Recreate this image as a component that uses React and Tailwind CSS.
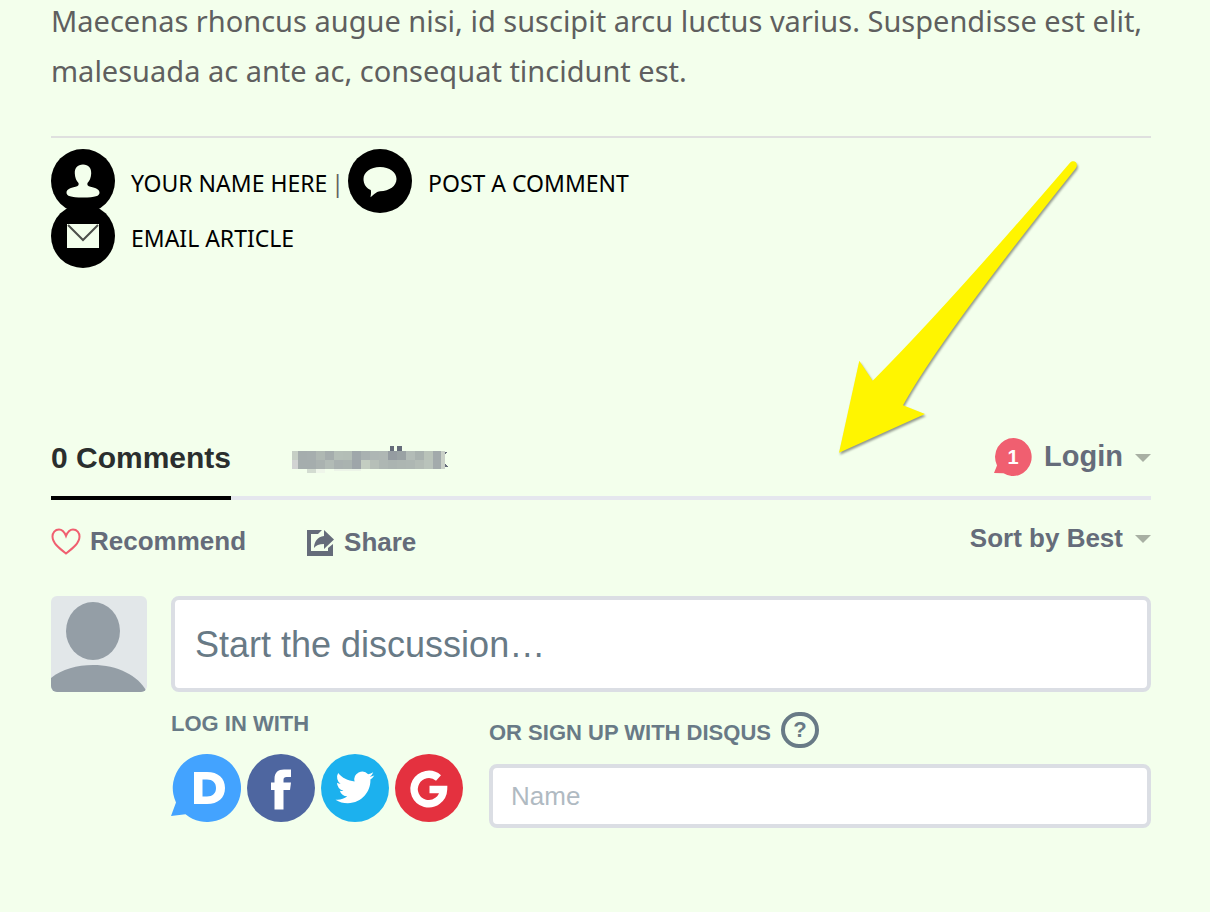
import { useState } from 'react';

const censorRows = [
  ['#c6cfc5', '#a5adad', '#a6aeae', '#afb8b3', '#a5adad', '#b4beb7', '#b3bdb6', '#9fa7aa', '#a9b1b1', '#aeb6b4', '#afb7b4', '#959ca1', '#9aa2a4', '#b3bcb7', '#a9b2af', '#b9c3b9', '#a2aaab', '#c9d0c7'],
  ['#d1d3d2', '#a5adad', '#a5adad', '#aab2b0', '#b2bbb6', '#a9b1b0', '#aab3b0', '#9ea5a9', '#c3cdc1', '#b6bfb8', '#aeb7b3', '#abb4b1', '#adb6b2', '#aeb7b3', '#b3bcb6', '#b9c3bb', '#a3abac', '#c9d0c7'],
];

function CensoredName() {
  return (
    <svg width="156" height="30" viewBox="0 0 156 30" shapeRendering="crispEdges" aria-hidden="true">
      {censorRows.map((row, r) =>
        row.map((fill, i) => (
          <rect
            key={`${r}-${i}`}
            x={i === 0 ? 0 : 6 + (i - 1) * 9 - (i === 17 ? 1 : 0)}
            y={7 + r * 9}
            width={i === 0 ? 6 : i === 17 ? 4 : 9}
            height="9"
            fill={fill}
          />
        ))
      )}
      <rect x="15" y="25" width="9" height="4" fill="#d3dcd1" />
      <rect x="24" y="25" width="9" height="4" fill="#eff6ea" />
      <rect x="42" y="25" width="27" height="2" fill="#ecf4e8" />
      <rect x="98" y="2" width="4" height="5" fill="#656c7a" />
      <rect x="105" y="2" width="5" height="5" fill="#656c7a" />
      <path d="M153 8h2l-2 3zM153 19l3 4h-3z" fill="#656c7a" />
    </svg>
  );
}

function Caret() {
  return (
    <svg width="16" height="8" viewBox="0 0 16 8" aria-hidden="true" className="pointer-events-none shrink-0">
      <path d="M0 0h16L8 8z" fill="#a8b0a3" />
    </svg>
  );
}

function RoundIcon({ children }) {
  return (
    <svg width="64" height="64" viewBox="0 0 64 64" aria-hidden="true" className="shrink-0">
      <circle cx="32" cy="32" r="32" fill="#000" />
      {children}
    </svg>
  );
}

function ArticleLinks() {
  return (
    <div className="mt-[11px] font-['Noto_Sans'] text-[23px] text-black">
      <div className="flex items-center">
        <a href="#author" className="flex items-center gap-4">
          <RoundIcon>
            <path d="M32 15.500c5.500 0 8.500 3.500 8.200 9-.2 4.500-1.700 7.500-3.700 9.500-.7 2 .5 3.200 3 3.800 5.500 1 9 2.700 9 6 0 3.200-4 4.700-16.500 4.700s-16.500-1.500-16.500-4.700c0-3.300 3.500-5 9-6 2.500-.6 3.700-1.800 3-3.800-2-2-3.500-5-3.700-9.500-.3-5.500 2.700-9 8.200-9z" fill="#f3ffec" />
          </RoundIcon>
          <span className="pt-1">YOUR NAME HERE</span>
        </a>
        <span className="px-1 pt-1 text-[#636363]">|</span>
        <a href="#comments" className="flex items-center gap-4">
          <RoundIcon>
            <path d="M32 18c9.500 0 16.500 5 16.500 12S41.500 42 32 42.300c-3 .2-5 2.200-9.500 6 .5-2.500.7-5 .3-7.200-4.600-2-7.300-6-7.300-11.100C15.500 23 22.500 18 32 18z" fill="#f3ffec" />
          </RoundIcon>
          <span className="pt-1">POST A COMMENT</span>
        </a>
      </div>
      <a href="#email" className="-mt-[9px] flex w-fit items-center gap-4">
        <RoundIcon>
          <rect x="16" y="20" width="32" height="24" fill="#f3ffec" />
          <path d="M17 21l15 15 15-15" fill="none" stroke="#4c4f4a" strokeWidth="2" />
        </RoundIcon>
        <span className="pt-1">EMAIL ARTICLE</span>
      </a>
    </div>
  );
}

function PointerArrow() {
  return (
    <svg
      width="100"
      height="310"
      viewBox="0 0 100 310"
      aria-hidden="true"
      className="pointer-events-none absolute top-[155px] right-[271px] overflow-visible drop-shadow-[1px_2px_1px_rgba(0,0,0,0.4)]"
    >
      <path
        d="M0 297.700L20.300 205.700 33.700 225.700Q109 150 231 7.700C235 4 240 8 237 13Q101 183 64 250.300L86 259z"
        fill="#fff500"
      />
    </svg>
  );
}

function DisqusIcon() {
  return (
    <svg width="70" height="68" viewBox="0 0 70 68" aria-hidden="true">
      <path d="M36 0a34 34 0 1 1-21.500 60.300L0 62l5-13.500A34 34 0 0 1 36 0z" fill="#43a3ff" />
      <path d="M23 18h13c11 0 18 6 18 16s-7 16-18 16H23zM31.500 25.500v17H36c5.500 0 9-3 9-8.500s-3.500-8.500-9-8.500z" fill="#fff" />
    </svg>
  );
}

function FacebookIcon() {
  return (
    <svg width="68" height="68" viewBox="0 0 68 68" aria-hidden="true">
      <circle cx="34" cy="34" r="34" fill="#4e66a0" />
      <path d="M27.500 55.500V36H24v-7.500h3.500V25c0-6.500 3.500-9.500 9.500-9.500h7V23h-4.500c-2 0-3 .8-3 2.800v2.700H44L43 36h-6.500v19.500z" fill="#fff" />
    </svg>
  );
}

function TwitterIcon() {
  return (
    <svg width="68" height="68" viewBox="0 0 68 68" aria-hidden="true">
      <circle cx="34" cy="34" r="34" fill="#1cb1ee" />
      <g transform="translate(14.500 14) scale(1.620)">
        <path d="M23.950 4.570a10 10 0 0 1-2.820.770 4.960 4.960 0 0 0 2.160-2.720c-.950.550-2 .950-3.130 1.180a4.920 4.920 0 0 0-8.380 4.480C7.690 8.100 4.070 6.130 1.640 3.160a4.920 4.920 0 0 0 1.520 6.570 4.900 4.900 0 0 1-2.230-.610v.060a4.920 4.920 0 0 0 3.950 4.830 5 5 0 0 1-2.210.080 4.940 4.940 0 0 0 4.600 3.420A9.870 9.870 0 0 1 0 19.540a13.990 13.990 0 0 0 7.550 2.210c9.050 0 14-7.500 14-13.980 0-.210 0-.420-.020-.630a9.940 9.940 0 0 0 2.460-2.550z" fill="#fff" />
      </g>
    </svg>
  );
}

function GoogleIcon() {
  return (
    <svg width="68" height="68" viewBox="0 0 68 68" aria-hidden="true">
      <circle cx="34" cy="34" r="34" fill="#e4313f" />
      <path d="M43.500 24a14.700 14.700 0 1 0 5 11.500H34.500" fill="none" stroke="#fff" strokeWidth="7.500" />
    </svg>
  );
}

const providers = [
  { name: 'Disqus', Icon: DisqusIcon },
  { name: 'Facebook', Icon: FacebookIcon },
  { name: 'Twitter', Icon: TwitterIcon },
  { name: 'Google', Icon: GoogleIcon },
];

function CommentsHeader() {
  return (
    <nav className="flex h-[84px] items-stretch border-b-4 border-[#e5e7ee] font-bold">
      <button type="button" className="-mb-1 border-b-4 border-black pt-[2px] text-[30px] text-[#2a2e2e]">
        0 Comments
      </button>
      <button type="button" aria-label="Community" className="ml-[61px] pt-[6px]">
        <CensoredName />
      </button>
      <button type="button" className="ml-auto flex items-center pt-[2px] text-[29px] text-[#656c7a]">
        <span className="relative mr-3 flex h-[38px] w-[38px] items-center justify-center text-[20px] text-white">
          <svg width="38" height="38" viewBox="0 0 38 38" aria-hidden="true" className="absolute inset-0">
            <path d="M19.500 0a18.500 19 0 1 1-10 35.200L0 35l3-7.500A18.500 19 0 0 1 19.500 0z" fill="#f05f70" />
          </svg>
          <span className="relative">1</span>
        </span>
        Login
        <span className="ml-3 pt-[2px]"><Caret /></span>
      </button>
    </nav>
  );
}

function Toolbar() {
  const [sort, setSort] = useState('best');

  return (
    <div className="mt-[21px] flex items-center text-[26px] font-bold text-[#656c7a]">
      <button type="button" className="flex items-center gap-[9px]">
        <svg width="30" height="28" viewBox="0 0 30 28" aria-hidden="true">
          <path d="M15 8C13 3 10.500 1.500 8 1.500c-4 0-6.500 3.200-6.500 7C1.500 15 8 20 15 25.500 22 20 28.500 15 28.500 8.500c0-3.800-2.500-7-6.500-7-2.500 0-5 1.500-7 6.500z" fill="none" stroke="#f05f70" strokeWidth="2" />
        </svg>
        Recommend
      </button>
      <button type="button" className="ml-[61px] flex items-center gap-[9px] pt-[2px]">
        <svg width="28" height="26" viewBox="0 0 28 26" aria-hidden="true">
          <path d="M0 0h15l-4 4H4v17h17v-3l5-4v12H0z" fill="#656c7a" />
          <path d="M17 0l10 9.500-10 9.500v-5c-5 0-8 1.500-10 4 0-6 3.500-11.500 10-12z" fill="#656c7a" />
        </svg>
        Share
      </button>
      <label className="ml-auto -mt-[6px] flex items-center gap-3">
        <select
          aria-label="Sort comments"
          value={sort}
          onChange={e => setSort(e.target.value)}
          className="appearance-none bg-transparent [field-sizing:content] focus:outline-none"
        >
          <option value="best">Sort by Best</option>
          <option value="newest">Sort by Newest</option>
          <option value="oldest">Sort by Oldest</option>
        </select>
        <Caret />
      </label>
    </div>
  );
}

export default function App() {
  const [comment, setComment] = useState('');
  const [name, setName] = useState('');

  return (
    <div className="relative min-h-screen overflow-hidden bg-[#f3ffec] pr-[59px] pl-[51px] font-['Liberation_Sans',Arial,sans-serif]">
      <p className="-mt-1 font-['Noto_Sans'] text-[29px] leading-[50px] text-[#5f5f5f]">
        Maecenas rhoncus augue nisi, id suscipit arcu luctus varius. Suspendisse est elit, malesuada ac ante ac, consequat tincidunt est.
      </p>
      <hr className="mt-10 border-t-2 border-[#dfe0df]" />
      <ArticleLinks />

      <section className="mt-[148px]">
        <CommentsHeader />
        <Toolbar />

        <div className="mt-[34px] flex items-start gap-6">
          <svg width="96" height="96" viewBox="0 0 96 96" aria-hidden="true" className="shrink-0 rounded-md">
            <rect width="96" height="96" fill="#e2e7e9" />
            <ellipse cx="42" cy="35" rx="27" ry="29" fill="#949ea6" />
            <path d="M0 82C11 73 26 69 42 69c24 0 45 10 54 27H0z" fill="#949ea6" />
          </svg>
          <div className="min-w-0 flex-1">
            <textarea
              rows={1}
              aria-label="Comment"
              placeholder="Start the discussion…"
              value={comment}
              onChange={e => setComment(e.target.value)}
              className="block h-24 w-full resize-none rounded-lg border-4 border-[#dbdee4] bg-white px-5 pt-[25px] pb-4 text-4xl text-[#687a86] placeholder-[#687a86] focus:outline-none"
            />
            <div className="mt-5 flex items-start gap-[26px]">
              <div>
                <h2 className="text-[22px] leading-6 font-bold text-[#687a86]">LOG IN WITH</h2>
                <div className="mt-[18px] flex gap-[6px]">
                  {providers.map(({ name, Icon }) => (
                    <button key={name} type="button" aria-label={name}>
                      <Icon />
                    </button>
                  ))}
                </div>
              </div>
              <div className="flex-1">
                <div className="flex items-center gap-[10px] text-[22px] leading-6 font-bold text-[#687a86]">
                  <label htmlFor="signup-name" className="pt-[6px]">OR SIGN UP WITH DISQUS</label>
                  <button type="button" aria-label="About Disqus" className="flex h-9 w-[38px] items-center justify-center rounded-full border-4 border-[#687a86]">
                    ?
                  </button>
                </div>
                <input
                  id="signup-name"
                  type="text"
                  placeholder="Name"
                  value={name}
                  onChange={e => setName(e.target.value)}
                  className="mt-4 block h-16 w-full rounded-lg border-4 border-[#dbdee4] bg-white px-[18px] text-[26px] text-[#687a86] placeholder-[#b0bac2] focus:outline-none"
                />
              </div>
            </div>
          </div>
        </div>
      </section>

      <PointerArrow />
    </div>
  );
}
